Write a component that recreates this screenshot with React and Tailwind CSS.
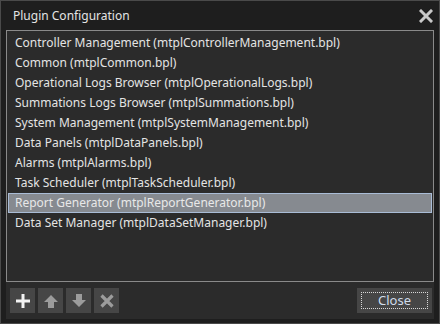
import React, { useState } from 'react';

const plugins = [
  'Controller Management (mtplControllerManagement.bpl)',
  'Common (mtplCommon.bpl)',
  'Operational Logs Browser (mtplOperationalLogs.bpl)',
  'Summations Logs Browser (mtplSummations.bpl)',
  'System Management (mtplSystemManagement.bpl)',
  'Data Panels (mtplDataPanels.bpl)',
  'Alarms (mtplAlarms.bpl)',
  'Task Scheduler (mtplTaskScheduler.bpl)',
  'Report Generator (mtplReportGenerator.bpl)',
  'Data Set Manager (mtplDataSetManager.bpl)',
];

function ToolButton({ children }) {
  return (
    <button className="w-[25px] h-[25px] bg-[#464646] flex items-center justify-center">
      {children}
    </button>
  );
}

export default function App() {
  const [selected, setSelected] = useState(8);

  return (
    <div
      className="w-[440px] h-[324px] bg-[#1e1e1e] border border-[#4a4a4a] flex flex-col text-[12px]"
      style={{ fontFamily: '"Noto Sans", "DejaVu Sans", sans-serif' }}
    >
      {/* Title bar */}
      <div className="h-[29px] flex items-center justify-between pl-3 pr-[6px] text-[#e4e4e4] text-[12px]">
        <span>Plugin Configuration</span>
        <svg width="14" height="14" viewBox="0 0 14 14">
          <path d="M2 2 L12 12 M12 2 L2 12" stroke="#c8c8c8" strokeWidth="3" strokeLinecap="square" />
        </svg>
      </div>

      {/* Content */}
      <div className="flex-1 mx-[5px] mb-[4px] bg-[#2b2b2b] flex flex-col">
        <div className="h-[252px] border border-[#8a8a8a] bg-[#2b2b2b] pt-[2px] px-[1px]">
          {plugins.map((p, i) => (
            <div
              key={p}
              onClick={() => setSelected(i)}
              className={
                i === selected
                  ? 'h-[20px] leading-[18px] px-[6px] bg-[#868a90] border border-[#a9bcd6] text-[#e8e8e8]'
                  : 'h-[20px] leading-[20px] px-[7px] text-[#e4e4e4]'
              }
            >
              {p}
            </div>
          ))}
        </div>

        <div className="flex items-center justify-between pl-[4px] pr-[2px] pt-[6px]">
          <div className="flex gap-[3px]">
            <ToolButton>
              <svg width="16" height="16" viewBox="0 0 16 16">
                <path d="M8 1 V15 M1 8 H15" stroke="#f2f2f2" strokeWidth="3" />
              </svg>
            </ToolButton>
            <ToolButton>
              <svg width="16" height="16" viewBox="0 0 16 16">
                <path d="M8 2 L15 9 H11 V15 H5 V9 H1 Z" fill="#9c9c9c" />
              </svg>
            </ToolButton>
            <ToolButton>
              <svg width="16" height="16" viewBox="0 0 16 16">
                <path d="M8 14 L15 7 H11 V1 H5 V7 H1 Z" fill="#9c9c9c" />
              </svg>
            </ToolButton>
            <ToolButton>
              <svg width="16" height="16" viewBox="0 0 16 16">
                <path d="M2.5 2.5 L13.5 13.5 M13.5 2.5 L2.5 13.5" stroke="#9c9c9c" strokeWidth="3.2" />
              </svg>
            </ToolButton>
          </div>
          <button className="w-[75px] h-[25px] bg-[#464646] p-[4px]">
            <div className="h-full border border-dotted border-[#d8d8d8] flex items-center justify-center text-[#cfdcea] text-[13px]">
              Close
            </div>
          </button>
        </div>
      </div>
    </div>
  );
}
